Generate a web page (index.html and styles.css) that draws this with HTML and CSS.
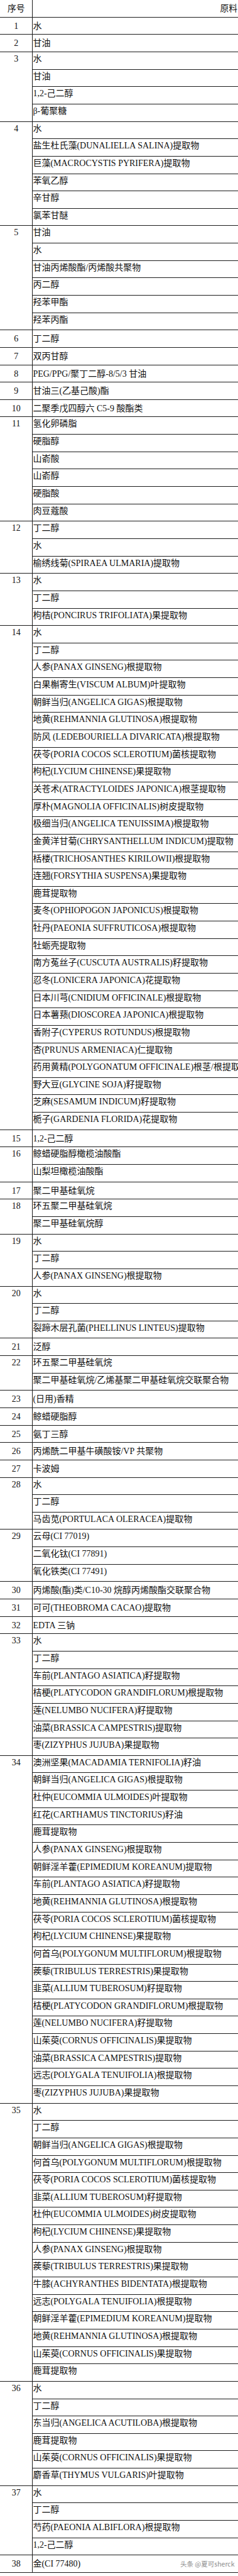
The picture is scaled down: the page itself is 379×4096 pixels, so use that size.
FILE: index.html
```html
<!DOCTYPE html>
<html lang="zh-CN">
<head>
<meta charset="utf-8">
<title>原料表</title>
<link rel="stylesheet" href="styles.css">
</head>
<body>
<div class="sheet">
  <div class="head"><div class="num">序号</div><div class="title">原料</div></div>

  <div class="grp one"><div class="num">1</div><div class="items"><div class="item">水</div></div></div>
  <div class="grp one"><div class="num">2</div><div class="items"><div class="item">甘油</div></div></div>
  <div class="grp"><div class="num">3</div><div class="items">
    <div class="item">水</div><div class="item">甘油</div><div class="item">1,2-己二醇</div><div class="item">β-葡聚糖</div>
  </div></div>
  <div class="grp"><div class="num">4</div><div class="items">
    <div class="item">水</div>
    <div class="item">盐生杜氏藻(DUNALIELLA SALINA)提取物</div>
    <div class="item">巨藻(MACROCYSTIS PYRIFERA)提取物</div>
    <div class="item">苯氧乙醇</div>
    <div class="item">辛甘醇</div>
    <div class="item">氯苯甘醚</div>
  </div></div>
  <div class="grp"><div class="num">5</div><div class="items">
    <div class="item">甘油</div>
    <div class="item">水</div>
    <div class="item">甘油丙烯酸酯/丙烯酸共聚物</div>
    <div class="item">丙二醇</div>
    <div class="item">羟苯甲酯</div>
    <div class="item">羟苯丙酯</div>
  </div></div>
  <div class="grp one"><div class="num">6</div><div class="items"><div class="item">丁二醇</div></div></div>
  <div class="grp one"><div class="num">7</div><div class="items"><div class="item">双丙甘醇</div></div></div>
  <div class="grp one"><div class="num">8</div><div class="items"><div class="item">PEG/PPG/聚丁二醇-8/5/3 甘油</div></div></div>
  <div class="grp one"><div class="num">9</div><div class="items"><div class="item">甘油三(乙基己酸)酯</div></div></div>
  <div class="grp one"><div class="num">10</div><div class="items"><div class="item">二聚季戊四醇六 C5-9 酸酯类</div></div></div>
  <div class="grp"><div class="num">11</div><div class="items">
    <div class="item">氢化卵磷脂</div>
    <div class="item">硬脂醇</div>
    <div class="item">山嵛酸</div>
    <div class="item">山嵛醇</div>
    <div class="item">硬脂酸</div>
    <div class="item">肉豆蔻酸</div>
  </div></div>
  <div class="grp"><div class="num">12</div><div class="items">
    <div class="item">丁二醇</div>
    <div class="item">水</div>
    <div class="item">榆绣线菊(SPIRAEA ULMARIA)提取物</div>
  </div></div>
  <div class="grp"><div class="num">13</div><div class="items">
    <div class="item">水</div>
    <div class="item">丁二醇</div>
    <div class="item">枸桔(PONCIRUS TRIFOLIATA)果提取物</div>
  </div></div>
  <div class="grp"><div class="num">14</div><div class="items">
    <div class="item">水</div>
    <div class="item">丁二醇</div>
    <div class="item">人参(PANAX GINSENG)根提取物</div>
    <div class="item">白果槲寄生(VISCUM ALBUM)叶提取物</div>
    <div class="item">朝鲜当归(ANGELICA GIGAS)根提取物</div>
    <div class="item">地黄(REHMANNIA GLUTINOSA)根提取物</div>
    <div class="item">防风 (LEDEBOURIELLA DIVARICATA)根提取物</div>
    <div class="item">茯苓(PORIA COCOS SCLEROTIUM)菌核提取物</div>
    <div class="item">枸杞(LYCIUM CHINENSE)果提取物</div>
    <div class="item">关苍术(ATRACTYLOIDES JAPONICA)根茎提取物</div>
    <div class="item">厚朴(MAGNOLIA OFFICINALIS)树皮提取物</div>
    <div class="item">极细当归(ANGELICA TENUISSIMA)根提取物</div>
    <div class="item">金黄洋甘菊(CHRYSANTHELLUM INDICUM)提取物</div>
    <div class="item">栝楼(TRICHOSANTHES KIRILOWII)根提取物</div>
    <div class="item">连翘(FORSYTHIA SUSPENSA)果提取物</div>
    <div class="item">鹿茸提取物</div>
    <div class="item">麦冬(OPHIOPOGON JAPONICUS)根提取物</div>
    <div class="item">牡丹(PAEONIA SUFFRUTICOSA)根提取物</div>
    <div class="item">牡蛎壳提取物</div>
    <div class="item">南方菟丝子(CUSCUTA AUSTRALIS)籽提取物</div>
    <div class="item">忍冬(LONICERA JAPONICA)花提取物</div>
    <div class="item">日本川芎(CNIDIUM OFFICINALE)根提取物</div>
    <div class="item">日本薯蓣(DIOSCOREA JAPONICA)根提取物</div>
    <div class="item">香附子(CYPERUS ROTUNDUS)根提取物</div>
    <div class="item">杏(PRUNUS ARMENIACA)仁提取物</div>
    <div class="item">药用黄精(POLYGONATUM OFFICINALE)根茎/根提取物</div>
    <div class="item">野大豆(GLYCINE SOJA)籽提取物</div>
    <div class="item">芝麻(SESAMUM INDICUM)籽提取物</div>
    <div class="item">栀子(GARDENIA FLORIDA)花提取物</div>
  </div></div>
  <div class="grp one"><div class="num">15</div><div class="items"><div class="item">1,2-己二醇</div></div></div>
  <div class="grp"><div class="num">16</div><div class="items">
    <div class="item">鲸蜡硬脂醇橄榄油酸酯</div>
    <div class="item">山梨坦橄榄油酸酯</div>
  </div></div>
  <div class="grp one"><div class="num">17</div><div class="items"><div class="item">聚二甲基硅氧烷</div></div></div>
  <div class="grp"><div class="num">18</div><div class="items">
    <div class="item">环五聚二甲基硅氧烷</div>
    <div class="item">聚二甲基硅氧烷醇</div>
  </div></div>
  <div class="grp"><div class="num">19</div><div class="items">
    <div class="item">水</div>
    <div class="item">丁二醇</div>
    <div class="item">人参(PANAX GINSENG)根提取物</div>
  </div></div>
  <div class="grp"><div class="num">20</div><div class="items">
    <div class="item">水</div>
    <div class="item">丁二醇</div>
    <div class="item">裂蹄木层孔菌(PHELLINUS LINTEUS)提取物</div>
  </div></div>
  <div class="grp one"><div class="num">21</div><div class="items"><div class="item">泛醇</div></div></div>
  <div class="grp"><div class="num">22</div><div class="items">
    <div class="item">环五聚二甲基硅氧烷</div>
    <div class="item">聚二甲基硅氧烷/乙烯基聚二甲基硅氧烷交联聚合物</div>
  </div></div>
  <div class="grp one"><div class="num">23</div><div class="items"><div class="item">(日用)香精</div></div></div>
  <div class="grp one"><div class="num">24</div><div class="items"><div class="item">鲸蜡硬脂醇</div></div></div>
  <div class="grp one"><div class="num">25</div><div class="items"><div class="item">氨丁三醇</div></div></div>
  <div class="grp one"><div class="num">26</div><div class="items"><div class="item">丙烯酰二甲基牛磺酸铵/VP 共聚物</div></div></div>
  <div class="grp one"><div class="num">27</div><div class="items"><div class="item">卡波姆</div></div></div>
  <div class="grp"><div class="num">28</div><div class="items">
    <div class="item">水</div>
    <div class="item">丁二醇</div>
    <div class="item">马齿苋(PORTULACA OLERACEA)提取物</div>
  </div></div>
  <div class="grp"><div class="num">29</div><div class="items">
    <div class="item">云母(CI 77019)</div>
    <div class="item">二氧化钛(CI 77891)</div>
    <div class="item">氧化铁类(CI 77491)</div>
  </div></div>
  <div class="grp one"><div class="num">30</div><div class="items"><div class="item">丙烯酸(酯)类/C10-30 烷醇丙烯酸酯交联聚合物</div></div></div>
  <div class="grp one"><div class="num">31</div><div class="items"><div class="item">可可(THEOBROMA CACAO)提取物</div></div></div>
  <div class="grp one"><div class="num">32</div><div class="items"><div class="item">EDTA 三钠</div></div></div>
  <div class="grp"><div class="num">33</div><div class="items">
    <div class="item">水</div>
    <div class="item">丁二醇</div>
    <div class="item">车前(PLANTAGO ASIATICA)籽提取物</div>
    <div class="item">桔梗(PLATYCODON GRANDIFLORUM)根提取物</div>
    <div class="item">莲(NELUMBO NUCIFERA)籽提取物</div>
    <div class="item">油菜(BRASSICA CAMPESTRIS)提取物</div>
    <div class="item">枣(ZIZYPHUS JUJUBA)果提取物</div>
  </div></div>
  <div class="grp"><div class="num">34</div><div class="items">
    <div class="item">澳洲坚果(MACADAMIA TERNIFOLIA)籽油</div>
    <div class="item">朝鲜当归(ANGELICA GIGAS)根提取物</div>
    <div class="item">杜仲(EUCOMMIA ULMOIDES)叶提取物</div>
    <div class="item">红花(CARTHAMUS TINCTORIUS)籽油</div>
    <div class="item">鹿茸提取物</div>
    <div class="item">人参(PANAX GINSENG)根提取物</div>
    <div class="item">朝鲜淫羊藿(EPIMEDIUM KOREANUM)提取物</div>
    <div class="item">车前(PLANTAGO ASIATICA)籽提取物</div>
    <div class="item">地黄(REHMANNIA GLUTINOSA)根提取物</div>
    <div class="item">茯苓(PORIA COCOS SCLEROTIUM)菌核提取物</div>
    <div class="item">枸杞(LYCIUM CHINENSE)果提取物</div>
    <div class="item">何首乌(POLYGONUM MULTIFLORUM)根提取物</div>
    <div class="item">蒺藜(TRIBULUS TERRESTRIS)果提取物</div>
    <div class="item">韭菜(ALLIUM TUBEROSUM)籽提取物</div>
    <div class="item">桔梗(PLATYCODON GRANDIFLORUM)根提取物</div>
    <div class="item">莲(NELUMBO NUCIFERA)籽提取物</div>
    <div class="item">山茱萸(CORNUS OFFICINALIS)果提取物</div>
    <div class="item">油菜(BRASSICA CAMPESTRIS)提取物</div>
    <div class="item">远志(POLYGALA TENUIFOLIA)根提取物</div>
    <div class="item">枣(ZIZYPHUS JUJUBA)果提取物</div>
  </div></div>
  <div class="grp"><div class="num">35</div><div class="items">
    <div class="item">水</div>
    <div class="item">丁二醇</div>
    <div class="item">朝鲜当归(ANGELICA GIGAS)根提取物</div>
    <div class="item">何首乌(POLYGONUM MULTIFLORUM)根提取物</div>
    <div class="item">茯苓(PORIA COCOS SCLEROTIUM)菌核提取物</div>
    <div class="item">韭菜(ALLIUM TUBEROSUM)籽提取物</div>
    <div class="item">杜仲(EUCOMMIA ULMOIDES)树皮提取物</div>
    <div class="item">枸杞(LYCIUM CHINENSE)果提取物</div>
    <div class="item">人参(PANAX GINSENG)根提取物</div>
    <div class="item">蒺藜(TRIBULUS TERRESTRIS)果提取物</div>
    <div class="item">牛膝(ACHYRANTHES BIDENTATA)根提取物</div>
    <div class="item">远志(POLYGALA TENUIFOLIA)根提取物</div>
    <div class="item">朝鲜淫羊藿(EPIMEDIUM KOREANUM)提取物</div>
    <div class="item">地黄(REHMANNIA GLUTINOSA)根提取物</div>
    <div class="item">山茱萸(CORNUS OFFICINALIS)果提取物</div>
    <div class="item">鹿茸提取物</div>
  </div></div>
  <div class="grp"><div class="num">36</div><div class="items">
    <div class="item">水</div>
    <div class="item">丁二醇</div>
    <div class="item">东当归(ANGELICA ACUTILOBA)根提取物</div>
    <div class="item">鹿茸提取物</div>
    <div class="item">山茱萸(CORNUS OFFICINALIS)果提取物</div>
    <div class="item">麝香草(THYMUS VULGARIS)叶提取物</div>
  </div></div>
  <div class="grp"><div class="num">37</div><div class="items">
    <div class="item">水</div>
    <div class="item">丁二醇</div>
    <div class="item">芍药(PAEONIA ALBIFLORA)根提取物</div>
    <div class="item">1,2-己二醇</div>
  </div></div>
  <div class="grp one last"><div class="num">38</div><div class="items"><div class="item">金(CI 77480)</div></div>
    <div class="wm">头条 @夏可sherck</div>
  </div>
  <div class="grp tail"></div>
</div>
</body>
</html>
```

FILE: styles.css
```css
html, body {
  margin: 0;
  padding: 0;
  background: #ffffff;
}

body {
  width: 379px;
  overflow: hidden;
}

.sheet {
  width: 379px;
  overflow: hidden;
  font-family: "Liberation Serif", "Noto Sans CJK SC", serif;
  font-size: 14px;
  color: #111111;
}

.head {
  display: flex;
  height: 26.76px;
  line-height: 26.76px;
}

.head .num {
  font-family: "Noto Sans CJK SC", sans-serif;
  font-size: 13.8px;
  line-height: 25px;
  padding-top: 0;
}

.head .title {
  flex: 1;
  min-width: 0;
  padding-left: 298px;
  white-space: nowrap;
  overflow: hidden;
  font-family: "Noto Sans CJK SC", sans-serif;
  font-size: 13.8px;
  line-height: 25px;
}

.grp {
  display: flex;
  border-top: 1px solid #1c1c1c;
}

.num {
  width: 52.4px;
  flex: none;
  border-right: 1px solid #1c1c1c;
  text-align: center;
  box-sizing: border-box;
  line-height: 20px;
  padding-top: 1px;
}

.items {
  flex: 1;
  min-width: 0;
}

.item {
  box-sizing: border-box;
  height: 26.652px;
  line-height: 20px;
  padding-top: 1px;
  white-space: pre;
  overflow: hidden;
}

.item + .item {
  height: 27.652px;
  border-top: 1px solid #1c1c1c;
}

.grp.one .num,
.grp.one .item {
  line-height: 25.6px;
  padding-top: 1px;
}

.grp.last {
  position: relative;
}

.wm {
  position: absolute;
  left: 287px;
  top: 7px;
  font-family: "Noto Sans CJK SC", sans-serif;
  font-size: 10.5px;
  line-height: 14px;
  color: #8c8c8c;
  white-space: nowrap;
  text-shadow: 0 0 2px #ffffff, 0 0 1px #ffffff;
}

.grp.tail {
  height: 6px;
}
```
